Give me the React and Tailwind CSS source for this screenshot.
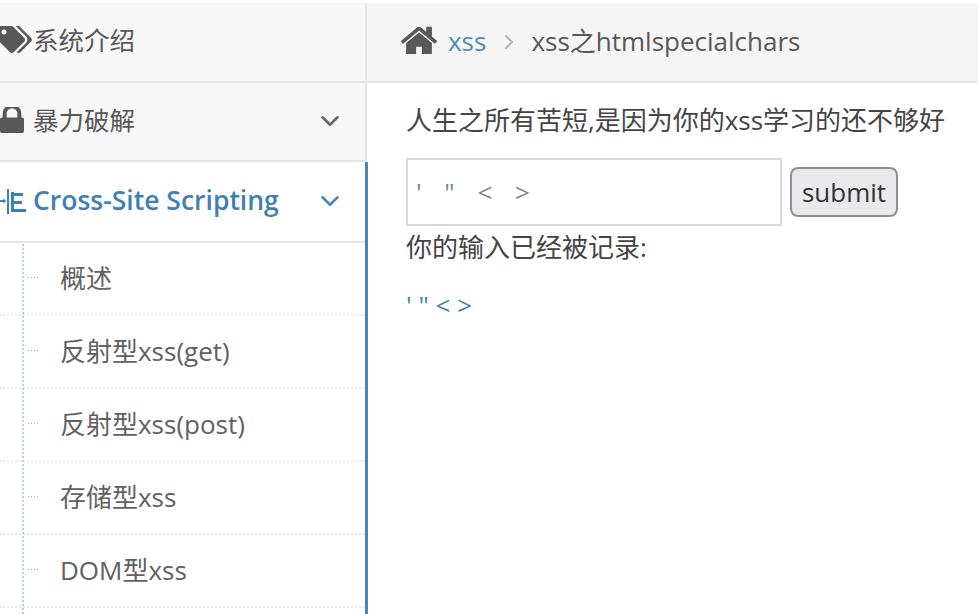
import { FaTags } from 'react-icons/fa';
import { FiChevronDown, FiChevronRight } from 'react-icons/fi';

const subItems = ['概述', '反射型xss(get)', '反射型xss(post)', '存储型xss', 'DOM型xss'];

const IndentIcon = () => (
  <svg viewBox="0 0 26 25" className="w-[26px] h-[25px] fill-[#3f7fb5] shrink-0">
    <rect x="0" y="11" width="4" height="2" />
    <path d="M3.5 9l2.5 3-2.5 3z" />
    <rect x="7" y="0" width="2" height="25" />
    <rect x="11" y="3" width="3" height="19" />
    <rect x="11" y="4" width="12" height="3" />
    <rect x="11" y="12" width="11" height="3" />
    <rect x="11" y="20" width="15" height="3" />
  </svg>
);

const LockIcon = () => (
  <svg viewBox="320 256 1152 1280" className="w-[24px] h-[26px] fill-current shrink-0 -mt-[4px]" preserveAspectRatio="none">
    <path d="M640 768h512v-192q0-106-75-181t-181-75-181 75-75 181v192zm832 96v576q0 40-28 68t-68 28h-960q-40 0-68-28t-28-68v-576q0-40 28-68t68-28h32v-192q0-184 132-316t316-132 316 132 132 316v192h32q40 0 68 28t28 68z" />
  </svg>
);

const HomeIcon = () => (
  <svg viewBox="90 230 1610 1240" className="w-[36px] h-[28px] fill-current shrink-0 -mt-[4px]">
    <path d="M1472 992v480q0 26-19 45t-45 19h-384v-384h-256v384h-384q-26 0-45-19t-19-45v-480q0-1 .5-3t.5-3l575-474 575 474q1 2 1 6zm223-69l-62 74q-8 9-21 11h-3q-13 0-21-7l-692-577-692 577q-12 8-24 7-13-2-21-11l-62-74q-8-10-7-23.5t11-21.5l719-599q32-26 76-26t76 26l244 204v-195q0-14 9-23t23-9h192q14 0 23 9t9 23v408l219 182q10 8 11 21.5t-7 23.5z" />
  </svg>
);

const SubItem = ({ label }) => (
  <li className="h-[73px] flex items-center border-b-2 border-dotted border-[#e8eaec] pl-[28px]">
    <span className="flex gap-[2px] mr-[22px] w-[10px] shrink-0 -mt-[2px]">
      <i className="w-[1px] h-[1px] bg-[#9db9d2]" />
      <i className="w-[1px] h-[1px] bg-[#9db9d2]" />
      <i className="w-[1px] h-[1px] bg-[#9db9d2]" />
      <i className="w-[1px] h-[1px] bg-[#9db9d2]" />
    </span>
    <span className="text-[26px] text-[#616161] leading-none -mt-[1px]">{label}</span>
  </li>
);

const Sidebar = () => (
  <aside className="w-[368px] shrink-0 flex flex-col">
    <div className="h-[80px] mr-[1px] bg-[#f7f7f7] border-b-2 border-r-2 border-[#e5e5e5] flex items-center text-[#585858]">
      <FaTags className="w-[34px] h-[27px] -ml-[2px] shrink-0 -mt-[5px]" />
      <span className="text-[25.5px] leading-none ml-[1px] -mt-[2px]">系统介绍</span>
    </div>
    <div className="h-[79px] mr-[1px] bg-[#f7f7f7] border-b-2 border-r-2 border-[#e5e5e5] flex items-center text-[#585858]">
      <LockIcon />
      <span className="text-[25.5px] leading-none ml-[9px] -mt-[1px]">暴力破解</span>
      <FiChevronDown className="w-[30px] h-[30px] ml-auto mr-[20px] -mt-[1px] text-[#666666]" />
    </div>
    <div className="flex-1 bg-white border-r-[3px] border-[#4a86b8] relative min-h-0 overflow-hidden">
      <div className="h-[81px] border-b-2 border-[#e5e5e5] flex items-center">
        <IndentIcon />
        <span className="text-[26.5px] leading-none font-semibold text-[#3f7fb5] ml-[7px] -mt-[3px]">Cross-Site Scripting</span>
        <FiChevronDown className="w-[30px] h-[30px] ml-auto mr-[20px] -mt-[1px] text-[#4a86b8]" />
      </div>
      <ul>
        {subItems.map((item) => (
          <SubItem key={item} label={item} />
        ))}
      </ul>
      <div className="absolute left-[22px] top-[82px] bottom-0 border-l-2 border-dotted border-[#b5cbdf]" />
    </div>
  </aside>
);

const Breadcrumb = () => (
  <div className="h-[80px] bg-[#f5f5f5] border-b-2 border-[#e5e5e5] flex items-center pl-[34px] text-[#585858]">
    <HomeIcon />
    <span className="text-[26px] leading-none text-[#4c8dbd] ml-[11px] -mt-[2px]">xss</span>
    <FiChevronRight className="w-[24px] h-[24px] text-[#b5b5b5] ml-[11px]" />
    <span className="text-[26px] leading-none ml-[10px] -mt-[2px]">xss之htmlspecialchars</span>
  </div>
);

const Content = () => (
  <div className="pl-[39px] text-[#444444] flex-1">
    <p className="text-[26px] leading-none mt-[24px] whitespace-nowrap">人生之所有苦短,是因为你的xss学习的还不够好</p>
    <div className="flex items-center mt-[25px]">
      <input
        readOnly
        value={`'   "   <   >`}
        className="w-[376px] h-[68px] border-2 border-[#d9d9d9] px-[8px] text-[26px] tracking-[0.6px] text-[#858585] bg-white outline-none"
      />
      <button className="ml-[8px] w-[108px] h-[50px] rounded-[8px] border-2 border-[#8f8f96] bg-[#e9e9ed] text-[26px] text-[#333333] leading-none">
        submit
      </button>
    </div>
    <p className="text-[26px] leading-none mt-[8px] whitespace-nowrap">你的输入已经被记录:</p>
    <p className="text-[26px] leading-none text-[#3f7fb5] mt-[32px]">' " &lt; &gt;</p>
  </div>
);

export default function App() {
  return (
    <div className="w-[978px] h-[614px] overflow-hidden bg-white flex pt-[3px] font-['Open_Sans','Noto_Sans_CJK_SC',sans-serif]">
      <Sidebar />
      <main className="flex-1 flex flex-col -ml-[1px] min-w-0">
        <Breadcrumb />
        <Content />
      </main>
    </div>
  );
}
